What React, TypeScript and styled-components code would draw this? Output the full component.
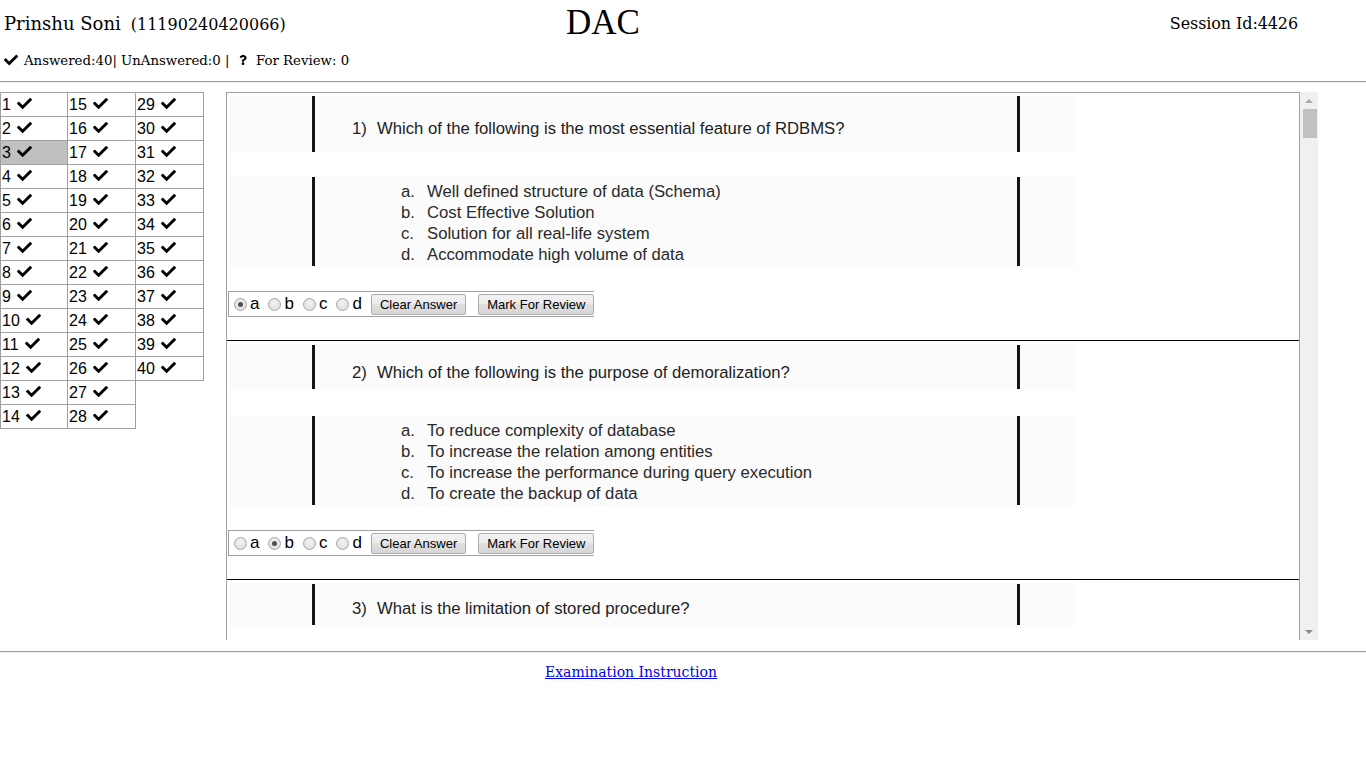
import React from "react";
import styled, { createGlobalStyle } from "styled-components";
import { FaCheck, FaQuestion } from "react-icons/fa";

const GlobalStyle = createGlobalStyle`
  html, body { margin: 0; padding: 0; background: #fff; }
  body { font-family: "DejaVu Serif", "Liberation Serif", serif; color: #000; }
`;

const Header = styled.div`
  display: grid;
  grid-template-columns: 436px 326px 1fr;
  align-items: center;
  height: 46px;
  padding: 0 68px 0 4px;
`;

const Name = styled.div`
  font-size: 18px;
  white-space: nowrap;
  display: flex;
  align-items: baseline;
  gap: 10px;
`;

const RollNo = styled.span`
  font-size: 16px;
`;

const Title = styled.div`
  font-family: "Liberation Serif", serif;
  font-size: 35px;
  line-height: 46px;
  text-align: center;
`;

const Session = styled.div`
  font-size: 16px;
  letter-spacing: -0.1px;
  text-align: right;
`;

const StatusRow = styled.div`
  display: flex;
  align-items: center;
  height: 28px;
  padding-left: 4px;
  font-size: 13.3px;
  white-space: pre;
`;

const StatusIcon = styled.span<{ $gap: number }>`
  display: inline-flex;
  margin-right: ${(p) => p.$gap}px;
`;

const Rule = styled.hr<{ $top: number }>`
  margin: ${(p) => p.$top}px 0 0;
  border: 0;
  border-top: 1px solid #a0a0a0;
  border-bottom: 1px solid #eeeeee;
  height: 0;
`;

const Body = styled.div`
  display: flex;
  align-items: flex-start;
  margin-top: 9px;
`;

const Grid = styled.div`
  display: flex;
  width: 204px;
  flex-shrink: 0;
`;

const GridColumn = styled.div<{ $first?: boolean }>`
  display: flex;
  flex-direction: column;
  margin-left: ${(p) => (p.$first ? 0 : -1)}px;
`;

const Cell = styled.div<{ $active?: boolean; $w: number }>`
  box-sizing: border-box;
  width: ${(p) => p.$w}px;
  height: 25px;
  margin-top: -1px;
  &:first-child { margin-top: 0; }
  border: 1px solid #a0a0a0;
  background: ${(p) => (p.$active ? "#c0c0c0" : "#fff")};
  font-family: "Liberation Sans", Arial, sans-serif;
  font-size: 16px;
  line-height: 23px;
  padding-left: 1px;
  display: flex;
  align-items: center;
`;

const CellCheck = styled.span`
  display: inline-flex;
  margin-left: 6px;
  margin-top: -2px;
`;

const PanelWrap = styled.div`
  display: flex;
  margin-left: 22px;
  height: 548px;
`;

const Panel = styled.div`
  box-sizing: border-box;
  width: 1074px;
  height: 548px;
  border: 1px solid #a0a0a0;
  border-bottom: 0;
  overflow: hidden;
`;

const ScrollBar = styled.div`
  width: 18px;
  background: #f0f0f0;
  display: flex;
  flex-direction: column;
`;

const ScrollArrow = styled.div<{ $down?: boolean }>`
  height: 17px;
  display: flex;
  align-items: center;
  justify-content: center;
  &::after {
    content: "";
    width: 0;
    height: 0;
    border-left: 4px solid transparent;
    border-right: 4px solid transparent;
    ${(p) =>
      p.$down
        ? "border-top: 4px solid #8a8a8a;"
        : "border-bottom: 4px solid #a8a8a8;"}
  }
`;

const ScrollThumb = styled.div`
  height: 29px;
  margin: 0 1px 0 3px;
  background: #c1c1c1;
`;

const ScrollTrack = styled.div`
  flex: 1;
`;

const QBlock = styled.div`
  padding-top: 3px;
  &:first-child { padding-top: 2px; }
  padding-bottom: 23px;
  border-bottom: 1px solid #000;
  font-family: "Liberation Sans", Arial, sans-serif;
  font-size: 16.7px;
  color: #222;
`;

const ImageBox = styled.div<{ $gap?: number }>`
  width: 846px;
  margin-left: 2px;
  margin-top: ${(p) => p.$gap ?? 0}px;
  padding: 1px 0;
  background: #fbfbfb;
`;

const Frame = styled.div<{ $pt: number; $pb: number }>`
  box-sizing: border-box;
  width: 708px;
  margin-left: 83px;
  border-left: 3px solid #151515;
  border-right: 3px solid #151515;
  padding: ${(p) => p.$pt}px 0 ${(p) => p.$pb}px 37px;
  line-height: 18px;
`;

const QNum = styled.span`
  display: inline-block;
  width: 25px;
`;

const OptionList = styled.div`
  padding-left: 49px;
`;

const OptionLine = styled.div`
  display: flex;
  line-height: 21px;
  color: #2a2a2a;
`;

const OptLetter = styled.span`
  width: 26px;
`;

const AnswerBar = styled.div`
  display: flex;
  align-items: center;
  width: fit-content;
  height: 26px;
  box-sizing: border-box;
  margin: 24px 0 0 1px;
  border: 1px solid #a0a0a0;
  border-right: 0;
  padding-left: 5px;
  font-size: 17px;
  color: #000;
  white-space: nowrap;
`;

const RadioItem = styled.label`
  display: flex;
  align-items: center;
  margin-right: 9px;
`;

const Radio = styled.span<{ $checked?: boolean }>`
  box-sizing: border-box;
  width: 13px;
  height: 13px;
  border-radius: 50%;
  border: 1px solid #a6a6a6;
  background: radial-gradient(circle at 50% 40%, #f4f4f4, #d8d8d8);
  margin-right: 3px;
  display: flex;
  align-items: center;
  justify-content: center;
  &::after {
    content: "";
    width: 5px;
    height: 5px;
    border-radius: 50%;
    background: ${(p) => (p.$checked ? "#505050" : "transparent")};
  }
`;

const Button = styled.button`
  flex-shrink: 0;
  white-space: nowrap;
  font-family: "Liberation Sans", Arial, sans-serif;
  font-size: 13px;
  height: 21px;
  padding: 0 8px;
  margin-left: 0;
  margin-right: 12px;
  border: 1px solid #acacac;
  border-radius: 2px;
  background: linear-gradient(#f2f2f2, #ebebeb 50%, #e0e0e0 50%, #d6d6d6);
  color: #000;
  line-height: 19px;
  &:last-child { margin-right: 0; }
`;

const Footer = styled.div`
  width: 1262px;
  margin-top: 9px;
  text-align: center;
  font-size: 14px;
  line-height: 20px;
`;

const Link = styled.a`
  color: #0000ee;
  text-decoration: underline;
`;

type Question = {
  n: number;
  text: string;
  options?: string[];
  answer: number;
  q: [number, number];
  gap: number;
};

const questions: Question[] = [
  {
    n: 1,
    text: "Which of the following is the most essential feature of RDBMS?",
    options: [
      "Well defined structure of data (Schema)",
      "Cost Effective Solution",
      "Solution for all real-life system",
      "Accommodate high volume of data",
    ],
    answer: 0,
    q: [24, 14],
    gap: 23,
  },
  {
    n: 2,
    text: "Which of the following is the purpose of demoralization?",
    options: [
      "To reduce complexity of database",
      "To increase the relation among entities",
      "To increase the performance during query execution",
      "To create the backup of data",
    ],
    answer: 1,
    q: [19, 7],
    gap: 25,
  },
  {
    n: 3,
    text: "What is the limitation of stored procedure?",
    answer: -1,
    q: [16, 7],
    gap: 24,
  },
];

const letters = ["a", "b", "c", "d"];

const columns = [
  { start: 1, count: 14, w: 68 },
  { start: 15, count: 14, w: 69 },
  { start: 29, count: 12, w: 69 },
];

export default function App() {
  return (
    <>
      <GlobalStyle />
      <Header>
        <Name>
          Prinshu Soni <RollNo>(11190240420066)</RollNo>
        </Name>
        <Title>DAC</Title>
        <Session>Session Id:4426</Session>
      </Header>
      <StatusRow>
        <StatusIcon $gap={6}>
          <FaCheck size={14} />
        </StatusIcon>
        {"Answered:40| UnAnswered:0 |  "}
        <StatusIcon $gap={8}>
          <FaQuestion size={10} />
        </StatusIcon>
        {"For Review: 0"}
      </StatusRow>
      <Rule $top={7} />
      <Body>
        <Grid>
          {columns.map((c, ci) => (
            <GridColumn key={ci} $first={ci === 0}>
              {Array.from({ length: c.count }, (_, i) => c.start + i).map((n) => (
                <Cell key={n} $w={c.w} $active={n === 3}>
                  {n}
                  <CellCheck>
                    <FaCheck size={15} />
                  </CellCheck>
                </Cell>
              ))}
            </GridColumn>
          ))}
        </Grid>
        <PanelWrap>
          <Panel>
            {questions.map((q) => (
              <QBlock key={q.n}>
                <ImageBox>
                  <Frame $pt={q.q[0]} $pb={q.q[1]}>
                    <QNum>{q.n})</QNum>
                    {q.text}
                  </Frame>
                </ImageBox>
                {q.options && (
                  <>
                    <ImageBox $gap={q.gap}>
                      <Frame $pt={4} $pb={1}>
                        <OptionList>
                          {q.options.map((o, i) => (
                            <OptionLine key={i}>
                              <OptLetter>{letters[i]}.</OptLetter>
                              {o}
                            </OptionLine>
                          ))}
                        </OptionList>
                      </Frame>
                    </ImageBox>
                    <AnswerBar>
                      {letters.map((l, i) => (
                        <RadioItem key={l}>
                          <Radio $checked={i === q.answer} />
                          {l}
                        </RadioItem>
                      ))}
                      <Button>Clear Answer</Button>
                      <Button>Mark For Review</Button>
                    </AnswerBar>
                  </>
                )}
              </QBlock>
            ))}
          </Panel>
          <ScrollBar>
            <ScrollArrow />
            <ScrollThumb />
            <ScrollTrack />
            <ScrollArrow $down />
          </ScrollBar>
        </PanelWrap>
      </Body>
      <Rule $top={11} />
      <Footer>
        <Link href="#">Examination Instruction</Link>
      </Footer>
    </>
  );
}
